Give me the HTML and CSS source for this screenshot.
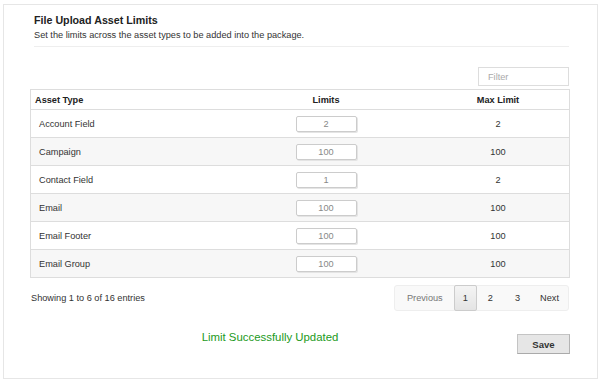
FILE: index.html
```html
<!DOCTYPE html>
<html lang="en">
<head>
    <meta charset="UTF-8">
    <title>File Upload Asset Limits</title>
    <link rel="stylesheet" href="styles.css">
</head>
<body>

    <div class="panel">
        <div class="panel-header">
            <h1>File Upload Asset Limits</h1>
            <p>Set the limits across the asset types to be added into the package.</p>
        </div>

        <div class="toolbar">
            <input type="text" class="filter" placeholder="Filter">
        </div>

        <table class="limits-table">
            <thead>
                <tr>
                    <th class="col-type">Asset Type</th>
                    <th class="col-limit">Limits</th>
                    <th class="col-max">Max Limit</th>
                </tr>
            </thead>
            <tbody>
                <tr>
                    <td>Account Field</td>
                    <td class="center"><input type="text" class="limit-input" value="2"></td>
                    <td class="center">2</td>
                </tr>
                <tr>
                    <td>Campaign</td>
                    <td class="center"><input type="text" class="limit-input" value="100"></td>
                    <td class="center">100</td>
                </tr>
                <tr>
                    <td>Contact Field</td>
                    <td class="center"><input type="text" class="limit-input" value="1"></td>
                    <td class="center">2</td>
                </tr>
                <tr>
                    <td>Email</td>
                    <td class="center"><input type="text" class="limit-input" value="100"></td>
                    <td class="center">100</td>
                </tr>
                <tr>
                    <td>Email Footer</td>
                    <td class="center"><input type="text" class="limit-input" value="100"></td>
                    <td class="center">100</td>
                </tr>
                <tr>
                    <td>Email Group</td>
                    <td class="center"><input type="text" class="limit-input" value="100"></td>
                    <td class="center">100</td>
                </tr>
            </tbody>
        </table>

        <div class="table-footer">
            <div class="info">Showing 1 to 6 of 16 entries</div>
            <div class="pagination">
                <span class="page disabled">Previous</span>
                <span class="page active">1</span>
                <span class="page">2</span>
                <span class="page">3</span>
                <span class="page next">Next</span>
            </div>
        </div>

        <div class="actions">
            <div class="message">Limit Successfully Updated</div>
            <button type="button" class="save-btn">Save</button>
        </div>
    </div>

</body>
</html>
```

FILE: styles.css
```css
body {
    margin: 0;
    font-family: "Liberation Sans", Arial, sans-serif;
    font-size: 9.2px;
    color: #333;
    background: #fff;
}

.panel {
    box-sizing: border-box;
    width: 595px;
    height: 375px;
    margin: 4px 0 0 3px;
    padding: 7px 27px 0 26px;
    border: 1px solid #e6e6e6;
}

.panel-header {
    margin: 0 1px 0 4px;
    padding-bottom: 4px;
    border-bottom: 1px solid #eeeeee;
}

.panel-header h1 {
    margin: 0;
    font-size: 10.7px;
    line-height: 16px;
    color: #222;
}

.panel-header p {
    margin: 0;
    font-size: 9.2px;
    line-height: 14px;
    color: #333;
}

.toolbar {
    display: flex;
    justify-content: flex-end;
    margin-top: 20px;
    padding-right: 1px;
}

.filter {
    box-sizing: border-box;
    width: 91px;
    height: 19px;
    padding: 0 9px;
    border: 1px solid #dddddd;
    font-family: inherit;
    font-size: 9.2px;
    color: #555;
    outline: none;
}

.filter::placeholder {
    color: #aaa;
}

.limits-table {
    width: 540px;
    margin-top: 3px;
    border-collapse: collapse;
    border: 1px solid #dddddd;
}

.limits-table th {
    height: 19px;
    padding: 0 4px;
    font-size: 9.2px;
    font-weight: bold;
    color: #222;
    text-align: center;
}

.limits-table th.col-type {
    text-align: left;
    width: 186px;
}

.limits-table th.col-limit {
    width: 194px;
}

.limits-table td {
    height: 27px;
    padding: 0 8px;
    border-top: 1px solid #dddddd;
    color: #333;
}

.limits-table tbody tr:nth-child(even) td {
    background: #f7f7f7;
}

.limits-table td.center {
    text-align: center;
}

.limit-input {
    box-sizing: border-box;
    width: 61px;
    height: 16px;
    padding: 0;
    border: 1px solid #cccccc;
    border-radius: 2px;
    background: #fff;
    font-family: inherit;
    font-size: 9.2px;
    color: #888;
    text-align: center;
    vertical-align: middle;
    box-shadow: 1px 1px 0 #e4e4e4;
}

.table-footer {
    display: flex;
    justify-content: space-between;
    align-items: center;
    margin-top: 7px;
    padding-right: 1px;
}

.info {
    padding-left: 1px;
    color: #333;
}

.pagination {
    display: flex;
    height: 24px;
    border: 1px solid #eeeeee;
    border-radius: 3px;
    background: #f9f9f9;
}

.page {
    display: flex;
    align-items: center;
    padding: 0 11px;
    color: #333;
}

.page.disabled {
    padding: 0 11px 0 12px;
    color: #777;
}

.page.next {
    padding: 0 9px;
}

.page.active {
    margin: -1px 0;
    padding: 0 8px;
    border: 1px solid #cccccc;
    border-radius: 2px;
    background: linear-gradient(#f4f4f4, #e4e4e4);
}

.actions {
    display: flex;
    align-items: flex-start;
    margin-top: 18px;
}

.message {
    flex: 1;
    padding-right: 7px;
    text-align: center;
    font-size: 11.4px;
    line-height: 16px;
    color: #229a22;
}

.save-btn {
    box-sizing: border-box;
    width: 53px;
    height: 20px;
    margin-top: 5px;
    padding: 0;
    border: 1px solid #c4c4c4;
    border-bottom-color: #aaa;
    border-right-color: #b4b4b4;
    background: #e6e6e6;
    font-family: inherit;
    font-size: 9.6px;
    font-weight: bold;
    color: #333;
}
```
